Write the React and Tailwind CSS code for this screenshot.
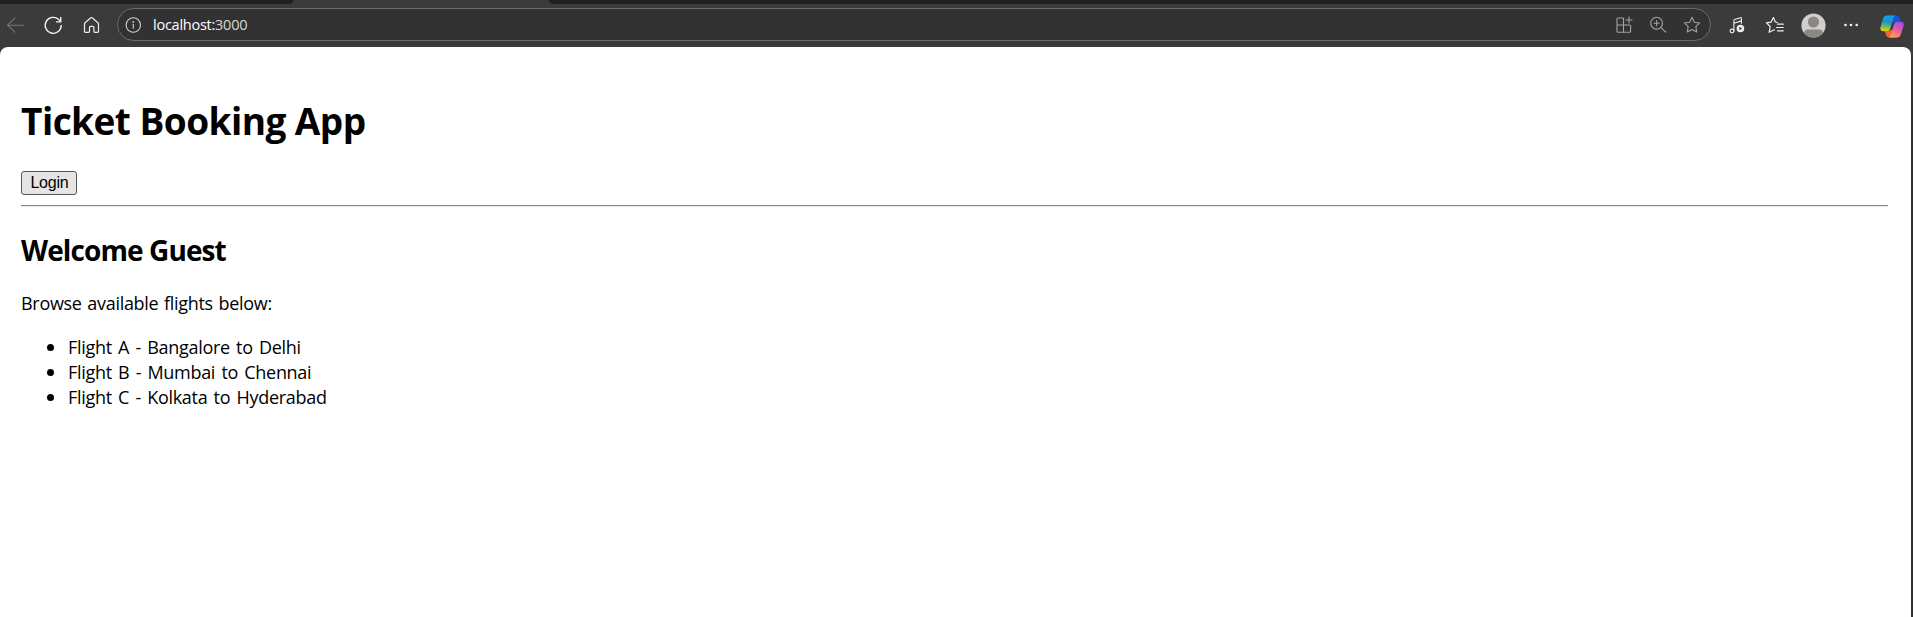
import React from "react";

function Icon({ className = "", children }) {
  return (
    <svg
      width="20"
      height="20"
      viewBox="0 0 20 20"
      fill="none"
      stroke="currentColor"
      strokeWidth="1.1"
      strokeLinecap="round"
      strokeLinejoin="round"
      className={"shrink-0 " + className}
    >
      {children}
    </svg>
  );
}

const STAR = "M10 2.3l2.35 4.9 5.35.75-3.9 3.75.95 5.3L10 14.45 5.25 17l.95-5.3L2.3 7.95l5.35-.75z";

function TabStrip() {
  return (
    <div className="flex h-1 justify-between bg-[#3b3b3b]">
      <div className="w-[293px] rounded-br-[6px] bg-[#202020]" />
      <div className="w-[1364px] rounded-bl-[6px] bg-[#202020]" />
    </div>
  );
}

function AddressBar() {
  return (
    <div className="flex h-[33px] w-[1594px] shrink-0 items-center rounded-full border border-[#6b6b6b] bg-[#323232] pr-[8.5px] pl-[5px]">
      <Icon className="text-[#d0d0d0]">
        <circle cx="10.3" cy="10" r="7.2" />
        <path d="M10.3 9.3v4" />
        <circle cx="10.3" cy="6.9" r=".35" fill="currentColor" />
      </Icon>
      <div className="ml-[10px] font-['Open_Sans','Noto_Sans',sans-serif] text-[14.5px] leading-[20px] tracking-[-0.25px] text-[#d6d6d6]">
        <span className="text-white">localhost:</span>3000
      </div>
      <div className="ml-auto flex gap-[14px] text-[#a3a3a3]">
        <Icon>
          <path d="M9 3H4a1 1 0 0 0-1 1v12.3a1 1 0 0 0 1 1h11.6a1 1 0 0 0 1-1V11a1 1 0 0 0-1-1H3M9.500 3v14.300M15 2v6M12 5h6" />
        </Icon>
        <Icon>
          <circle cx="8.600" cy="8.200" r="5.900" />
          <path d="M13 12.600l4.700 4.500M8.600 5.600v5.200M6 8.200h5.200" />
        </Icon>
        <Icon>
          <path d={STAR} />
        </Icon>
      </div>
    </div>
  );
}

function CopilotLogo() {
  return (
    <svg width="24" height="23" viewBox="0 0 24 23" className="shrink-0">
      <defs>
        <linearGradient id="cool" x1="0.4" y1="0" x2="0.3" y2="1">
          <stop offset="0" stopColor="#169ff0" />
          <stop offset="0.4" stopColor="#1d8ed0" />
          <stop offset="0.7" stopColor="#6fba58" />
          <stop offset="1" stopColor="#eed20d" />
        </linearGradient>
        <linearGradient id="warm" x1="0.7" y1="0" x2="0.3" y2="1">
          <stop offset="0" stopColor="#a04ee8" />
          <stop offset="0.5" stopColor="#ea5a9e" />
          <stop offset="1" stopColor="#ffa057" />
        </linearGradient>
      </defs>
      <path d="M8 .5h8.500q2.200 0 3 2.300l1.300 4.200h-4.500q-2 0-2.700 2.200z" fill="#1755cf" />
      <path d="M16 22.500H9q-2 0-2.700-2l-1.500-4.300h3.500q2 0 2.700-2z" fill="#f0663e" />
      <path d="M6.800.500h8.400q-1.300.8-1.900 2.800l-3 10.200q-.8 2.700-3.300 2.700H3.200q-3.500 0-2.700-4L2.800 4Q3.900.500 6.800.500z" fill="url(#cool)" />
      <path d="M17 22.500H9q1.300-.8 1.900-2.800l3-10.200q.8-2.700 3.300-2.700h3.700q3.500 0 2.700 4L21 19q-1.100 3.500-4 3.500z" fill="url(#warm)" />
    </svg>
  );
}

function Toolbar() {
  return (
    <div className="flex h-[43px] items-start bg-[#3b3b3b] pt-1">
      <div className="flex h-[33px] w-[117px] shrink-0 items-center pl-[5px]">
        <Icon className="text-[#777777]">
          <path d="M18.300 10.200H2.500M9.800 3.200l-7.300 7 7.300 7" />
        </Icon>
        <Icon className="ml-[18px] text-[#f2f2f2]">
          <path strokeWidth="1.350" d="M18.200 10.500A8 8 0 1 1 15.800 4.600L17.700 6.500M17.800 2.500v4.300h-4.300" />
        </Icon>
        <Icon className="ml-[19px] text-[#ededed]">
          <path strokeWidth="1.200" d="M2.500 9q0-.8.600-1.300l5.700-4.900q.7-.6 1.400 0l5.700 4.900q.6.500.6 1.300v7.300q0 1-1 1h-2.600q-1 0-1-1v-4q0-1-1-1H8.500q-1 0-1 1v4q0 1-1 1h-3q-1 0-1-1z" />
        </Icon>
      </div>
      <AddressBar />
      <div className="flex h-[33px] flex-1 items-center text-[#f0f0f0]">
        <Icon className="ml-[16px]">
          <circle cx="5" cy="16" r="1.900" />
          <path d="M6.900 16V5.300q0-.6.600-.8l6-1.800q.9-.2.900.6v5M6.900 8.200l7.500-2.300" />
          <circle cx="13.400" cy="13.500" r="3.800" fill="currentColor" stroke="none" />
          <path d="M12.400 11.700v3.600l2.900-1.800z" fill="#3b3b3b" stroke="none" />
        </Icon>
        <Icon className="ml-[17.500px]">
          <path strokeWidth="1.200" d="M12.300 7.500l-1.900-.5L8.400 2.500 6 7.200l-4.500.700 3.700 3.600-1.100 5.800 5.200-2.600M12.500 9.200h5.800M11.500 12.500h6.800M12.500 15.800h5.800" />
        </Icon>
        <svg width="25" height="25" viewBox="0 0 25 25" className="mt-px ml-[16px] shrink-0">
          <circle cx="12.500" cy="12.500" r="12.100" fill="#d1cfcb" />
          <circle cx="12.500" cy="9" r="5.600" fill="#8b8884" />
          <path d="M3.300 20.200q0-3.700 3.600-3.700h11.200q3.600 0 3.600 3.700-3.700 4.200-9.200 4.200t-9.200-4.200z" fill="#8b8884" />
        </svg>
        <Icon className="ml-[16px]">
          <g fill="currentColor" stroke="none">
            <circle cx="3.500" cy="10" r="1.300" />
            <circle cx="9" cy="10" r="1.300" />
            <circle cx="14.700" cy="10" r="1.300" />
          </g>
        </Icon>
        <div className="mt-[3px] ml-[18px]">
          <CopilotLogo />
        </div>
      </div>
    </div>
  );
}

export default function App() {
  return (
    <div className="flex h-[617px] w-[1913px] flex-col overflow-hidden bg-[#303030]">
      <TabStrip />
      <Toolbar />
      <div className="flex-1 bg-linear-to-b from-[#3b3b3b] from-0% to-[#303030] to-10% pr-[2px]">
        <main className="h-full rounded-t-[8px] bg-white pt-[48px] pr-[23px] pl-[21px] font-['Open_Sans','Noto_Sans',sans-serif] text-black">
          <h1 className="h-[52px] text-[37px] leading-[52px] font-bold tracking-[-0.540px] whitespace-nowrap">
            Ticket Booking App
          </h1>
          <button className="mt-[24px] flex h-6 w-14 items-center justify-center rounded-[3px] border border-[#555555] bg-[#e5e5e5] pl-px font-['Liberation_Sans',sans-serif] text-[16px] leading-5 tracking-[-0.2px]">
            Login
          </button>
          <hr className="mt-[10px] h-[2px] border-t border-b border-t-[#858585] border-b-[#ededed]" />
          <h2 className="mt-[23px] h-[40px] text-[28px] leading-[40px] font-bold tracking-[-0.9px] whitespace-nowrap">
            Welcome Guest
          </h2>
          <p className="mt-[21px] h-[25px] text-[18px] leading-[25px] tracking-[-0.3px] [word-spacing:1.300px] whitespace-nowrap">
            Browse available flights below:
          </p>
          <ul className="mt-[18px] list-disc pl-[47px] text-[18px] leading-[25px] tracking-[-0.3px] [word-spacing:1.900px] marker:text-[21px]">
            <li className="h-[25px]">Flight A - Bangalore to Delhi</li>
            <li className="h-[25px]">Flight B - Mumbai to Chennai</li>
            <li className="h-[25px]">Flight C - Kolkata to Hyderabad</li>
          </ul>
        </main>
      </div>
    </div>
  );
}
